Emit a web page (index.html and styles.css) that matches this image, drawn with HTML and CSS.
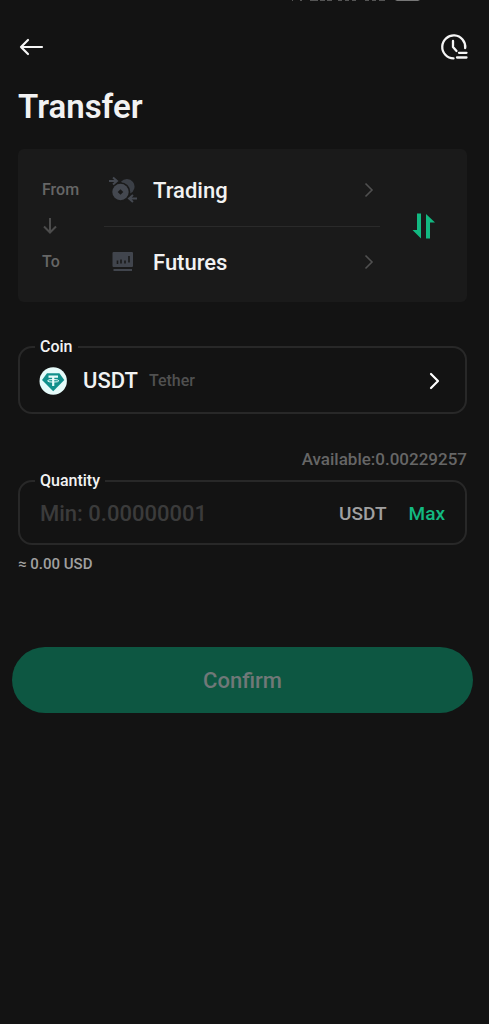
FILE: index.html
```html
<!DOCTYPE html>
<html lang="en">
<head>
<meta charset="utf-8">
<meta name="viewport" content="width=device-width, initial-scale=1">
<title>Transfer</title>
<link rel="stylesheet" href="styles.css">
</head>
<body>
<div class="status" aria-hidden="true">
  <svg width="132" height="2" viewBox="0 0 132 2"><g fill="#555"><path d="M4 0h1v1H4zM12 0h2v1h-2z"/><path d="M22 0h8v1h-8zM32 0h5v1h-5zM39 0h5v1h-5zM50 0h4v1h-4zM57 0h4v1h-4zM64 0h4v1h-4zM77 0h4v1h-4zM84 0h4v1h-4zM91 0h6v1h-6z"/></g><path d="M107 0h25l-2 1h-21z" fill="#777"/></svg>
</div>
<header class="topbar">
  <button class="icon-btn" type="button" aria-label="Back">
    <svg width="26" height="26" viewBox="0 0 26 26" fill="none" stroke="#f5f5f5" stroke-width="2.200" stroke-linecap="round" stroke-linejoin="round"><path d="M24 13H3M10 6l-7 7 7 7"/></svg>
  </button>
  <button class="icon-btn" type="button" aria-label="History">
    <svg width="28" height="28" viewBox="0 0 28 28" fill="none" stroke="#f5f5f5" stroke-width="2.300" stroke-linecap="round" stroke-linejoin="round"><path d="M13.500 25.400A11.500 11.500 0 1 1 25.200 15M13 8v6l3.500 4M19 19.800h7.500M17 24.500h9.500"/></svg>
  </button>
</header>
<main class="page">
  <h1 class="title">Transfer</h1>

  <section class="card">
    <div class="ends">
      <span class="end">From</span>
      <svg class="down" width="16" height="18" viewBox="0 0 16 18" fill="none" stroke="#4c4c4c" stroke-width="2"><path d="M8 1v14M2 9.500l6 6 6-6"/></svg>
      <span class="end">To</span>
    </div>
    <div class="accounts">
      <button class="account" type="button">
        <svg class="account-icon" width="30" height="28" viewBox="0 0 30 28">
          <path d="M13 5.800A7.600 7.600 0 1 1 22 17.500" fill="#3b3f46"/>
          <circle cx="12.500" cy="16" r="9.800" fill="#1a1a1a"/>
          <circle cx="12.500" cy="16" r="8.200" fill="#444850"/>
          <path d="M12.500 13.200l2.800 2.800-2.800 2.800L9.700 16z" fill="#1a1a1a"/>
          <path d="M1 5h7M5 1.500L9 5 5 8.500M29 22.500h-7M25 19l-4 3.500 4 3.500" fill="none" stroke="#444850" stroke-width="2"/>
        </svg>
        <span class="account-name">Trading</span>
        <svg class="more" width="10" height="16" viewBox="0 0 10 16" fill="none" stroke="#505050" stroke-width="1.600"><path d="M1.500 1.500L8 8l-6.500 6.500"/></svg>
      </button>
      <button class="account" type="button">
        <svg class="account-icon" width="30" height="28" viewBox="0 0 30 28">
          <rect x="4.500" y="4" width="20.500" height="15" rx="1" fill="#41454d"/>
          <path d="M9.500 16v-3.500M13 15.500v-4M17 15.500v-3M21 14.500V8" stroke="#1a1a1a" stroke-width="1.600"/>
          <path d="M5.500 22h18.500" stroke="#41454d" stroke-width="2"/>
        </svg>
        <span class="account-name">Futures</span>
        <svg class="more" width="10" height="16" viewBox="0 0 10 16" fill="none" stroke="#505050" stroke-width="1.600"><path d="M1.500 1.500L8 8l-6.500 6.500"/></svg>
      </button>
    </div>
    <button class="swap" type="button" aria-label="Swap accounts">
      <svg width="24" height="26" viewBox="0 0 24 26" fill="#12b981"><path d="M5 .5h4v25l-8.500-8.500h4.500zM14 25.500V1l9 8.500h-5v16z"/></svg>
    </button>
  </section>

  <fieldset class="field coin">
    <legend class="legend">Coin</legend>
    <button class="coin-select" type="button">
      <svg width="28" height="28" viewBox="0 0 28 28"><circle cx="14.200" cy="14" r="13.700" fill="#e6fbfa"/><path d="M8 6.200h12.400l4.900 6.800L14.200 24.200 3 13z" fill="#12908c"/><path d="M9.500 9.600h9.500M14.200 9.500v9.500" stroke="#e6fbfa" stroke-width="2.200"/><ellipse cx="14.200" cy="13.800" rx="5.600" ry="1.300" fill="none" stroke="#e6fbfa"/></svg>
      <span class="coin-code">USDT</span>
      <span class="coin-name">Tether</span>
      <svg class="more" width="12" height="18" viewBox="0 0 12 18" fill="none" stroke="#fff" stroke-width="2.200" stroke-linecap="round" stroke-linejoin="round"><path d="M3 2l7 7-7 7"/></svg>
    </button>
  </fieldset>

  <p class="available">Available:0.00229257</p>
  <fieldset class="field quantity">
    <legend class="legend"><label for="quantity">Quantity</label></legend>
    <div class="quantity-row">
      <input class="amount" id="quantity" type="text" inputmode="decimal" placeholder="Min: 0.00000001">
      <span class="unit">USDT</span>
      <button class="max" type="button">Max</button>
    </div>
  </fieldset>
  <p class="estimate">≈ 0.00 USD</p>
</main>
<footer class="actions">
  <button class="confirm" type="submit" disabled>Confirm</button>
</footer>
</body>
</html>
```
FILE: styles.css
```css
* {
  box-sizing: border-box;
}

body {
  margin: 0;
  min-height: 100vh;
  background: #131313;
  color: #f2f2f2;
  font-family: Roboto, "Noto Sans", sans-serif;
  font-weight: 500;
}

button,
input {
  margin: 0;
  padding: 0;
  border: 0;
  background: none;
  color: inherit;
  font: inherit;
  text-align: left;
}

svg {
  display: block;
  flex: none;
}

.status {
  display: flex;
  justify-content: flex-end;
  height: 4px;
  padding-right: 69px;
}

.topbar {
  display: flex;
  align-items: center;
  justify-content: space-between;
  height: 86px;
  padding: 0 21px 0 18px;
}

.page {
  padding: 0 22px 0 18px;
}

.title {
  margin: 0;
  font-size: 33px;
  line-height: 34px;
  font-weight: 600;
}

.card {
  display: flex;
  align-items: center;
  margin-top: 25px;
  padding: 5px 31px 5px 24px;
  border-radius: 6px;
  background: #1a1a1a;
}

.ends {
  display: flex;
  flex-direction: column;
  gap: 17px;
  width: 62px;
  color: #666;
  font-size: 16px;
  line-height: 20px;
}

.account {
  display: flex;
  align-items: center;
  width: 100%;
  height: 72px;
  padding: 0 6px 0 4px;
}

.account + .account {
  height: 71px;
  border-top: 1px solid #2a2a2a;
}

.accounts {
  flex: 1;
}

.account-name {
  margin-left: 15px;
  font-size: 22px;
}

.more {
  margin-left: auto;
}

.swap {
  margin-left: 32px;
}

.field {
  min-width: 0;
  margin: 0;
  padding: 0 20px 0 15px;
  border: 2px solid #282828;
  border-radius: 14px;
}

.legend {
  padding: 0 5px;
  font-size: 16px;
  line-height: 20px;
}

.coin {
  margin-top: 35px;
}

.coin-select {
  display: flex;
  align-items: center;
  width: 100%;
  height: 55px;
  padding: 0 5px 8px 4px;
}

.coin-code {
  margin-left: 16px;
  font-size: 22px;
}

.coin-name {
  margin-left: 11px;
  color: #505050;
  font-size: 16px;
}

.available {
  margin: 35px 0 0;
  color: #666;
  font-size: 17px;
  line-height: 20px;
  text-align: right;
}

.quantity {
  margin-top: 2px;
}

.quantity-row {
  display: flex;
  align-items: center;
  height: 52px;
  padding: 0 0 7px 5px;
}

.amount {
  flex: 1;
  min-width: 0;
  font-size: 22px;
}

.amount::placeholder {
  color: #3b3b3b;
  opacity: 1;
}

.unit {
  color: #a0a0a0;
  font-size: 19px;
}

.max {
  margin-left: 22px;
  color: #12b981;
  font-size: 19px;
}

.estimate {
  margin: 9px 0 0;
  color: #a0a0a0;
  font-size: 15px;
  line-height: 20px;
}

.actions {
  padding: 73px 16px 24px 12px;
}

.confirm {
  width: 100%;
  height: 66px;
  border-radius: 33px;
  background: #0d5742;
  color: #707878;
  font-size: 22px;
  text-align: center;
}
```
